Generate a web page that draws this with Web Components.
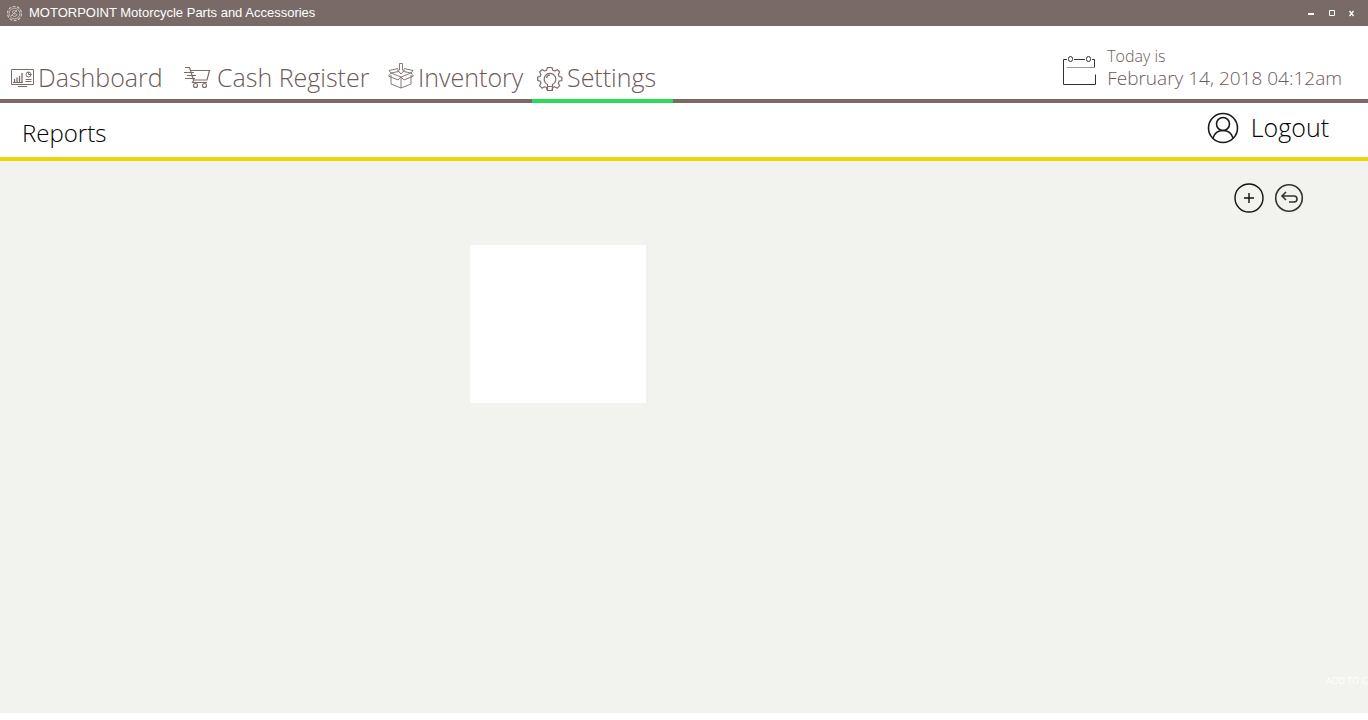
<!DOCTYPE html>
<html lang="en">
<head>
<meta charset="utf-8">
<title>MOTORPOINT Motorcycle Parts and Accessories</title>
<style>
  html, body { margin: 0; background: #fff; }
  body { font-family: "Open Sans", "Noto Sans", sans-serif; font-weight: 300; --brand: #796a67; --text: #6b5b58; color: var(--text); }
</style>
</head>
<body>
<pos-app></pos-app>

<template id="app">
  <style>
    :host { display: flex; flex-direction: column; min-height: 100vh; overflow-x: hidden; }
    reports-page { flex: 1; margin-bottom: 7px; }
  </style>
  <title-bar>MOTORPOINT Motorcycle Parts and Accessories</title-bar>
  <main-header></main-header>
  <sub-header>Reports</sub-header>
  <reports-page></reports-page>
</template>

<template id="title-bar">
  <style>
    :host { display: flex; align-items: center; height: 26px; padding: 0 11px 0 6px; background: var(--brand); color: #fff; font: 13px/26px "Liberation Sans", Arial, sans-serif; box-sizing: border-box; }
    span { flex: 1; margin-left: 6px; }
    button { width: 10px; height: 16px; margin-left: 10px; padding: 0; border: 0; background: none; color: inherit; display: block; }
    svg { display: block; }
  </style>
  <svg width="17" height="17" viewBox="0 0 17 17" fill="none" stroke="#d2cac8"><circle cx="8.500" cy="8.500" r="7" stroke-dasharray="3 1.400" stroke-width="1.200"/><circle cx="8.500" cy="8.500" r="5.300" stroke-width=".8"/><path d="M11 6.500C9 5 6 5.500 6.500 7.500s4.500.500 4.500 2.300-3.500 2-5 .5M5 11l6-6" stroke-width=".9"/></svg>
  <span><slot></slot></span>
  <button aria-label="Minimize"><svg width="10" height="16"><path d="M1 8h6v2H1z" fill="#fff"/></svg></button>
  <button aria-label="Maximize"><svg width="10" height="16"><path d="M2.500 5.500h5v5h-5z" fill="none" stroke="#fff"/></svg></button>
  <button aria-label="Close"><svg width="10" height="16"><path d="M2.500 6l4 5M6.500 6l-4 5" stroke="#fff" stroke-width="1.300"/></svg></button>
</template>

<template id="main-header">
  <style>
    :host { display: flex; justify-content: space-between; height: 77px; box-sizing: border-box; background: linear-gradient(var(--brand), var(--brand)) bottom / 100% 4px no-repeat #fff; }
    nav { display: grid; grid-template-columns: 174px 203px 150px 141px; margin-left: 5px; }
    .date { display: flex; gap: 10px; padding: 20px 26px 0 0; white-space: nowrap; }
    .date svg { margin-top: 8px; }
    small, time { display: block; }
    small { font-size: 16px; line-height: 21px; }
    time { font-size: 19px; line-height: 22px; }
  </style>
  <nav>
    <nav-tab label="Dashboard">
      <svg width="24" height="22" viewBox="0 0 24 22" fill="none" stroke="#7b6c69"><path d="M1.500 2.500h22v15h-22zM8 19.500h9"/><path d="M4.500 15v-3M7 15v-4.500M9.500 15V9M12 15V6" stroke-width="1.300"/><path d="M3 15.500h10M15.500 12.500h6M15.500 14.500h6"/><circle cx="18.500" cy="7.500" r="2.500"/><path d="M18.500 7.500V5M18.500 7.500h3"/></svg>
    </nav-tab>
    <nav-tab label="Cash Register">
      <svg width="29" height="24" viewBox="0 0 29 24" fill="none" stroke="#7b6c69" stroke-width="1.200"><path d="M1 1.500h4.500l4 12.500h13.500L25.500 4.500H7M10 14l-1.500 2.500H23"/><path d="M0 6.500h10M3 9.500h9M1 12.500h10"/><circle cx="11.500" cy="19.500" r="2"/><circle cx="20.500" cy="19.500" r="2"/></svg>
    </nav-tab>
    <nav-tab label="Inventory">
      <svg width="27" height="30" viewBox="0 0 27 30" fill="none" stroke="#7b6c69" stroke-width=".9"><path d="M4 12v9l10 4 10-4v-9M14 14v11M14 14L4 10l10-2 10 2zM4 10L1.500 13l9.500 4 3-3 3 3 9.500-4L24 10M4 10L2 7.500l9-2M24 10l2-2.500-9-2"/><path d="M12.500.500h3V7h2L14 11 10.500 7h2z" fill="#fff"/></svg>
    </nav-tab>
    <nav-tab label="Settings" active>
      <svg width="26" height="26" viewBox="0 0 26 26" fill="none" stroke="#7b6c69" stroke-width="1.200"><path d="M10 25l-.5-2.500-2-.8-2.500 1.500-2.500-2.500L4 18.200l-.8-2L.7 15.500v-3.400l2.500-.6.8-2L2.500 7 5 4.600 7.500 6l2-.8L10.500 2.500h4.500l.7 2.700 2 .8 2.600-1.400L22.700 7l-1.400 2.500.8 2 2.700.6v3.400l-2.700.7-.8 2 1.400 2.500-2.400 2.500-2.600-1.500-2 .8L15 25" stroke-linejoin="round"/><path d="M10.500 25.500v-6a5.800 5.800 0 1 1 5 0v6zM10.500 21.500h5M9.500 13a4 4 0 0 1 3.500-3"/></svg>
    </nav-tab>
  </nav>
  <div class="date">
    <svg width="35" height="34" viewBox="0 0 35 34" fill="none" stroke="#333"><path d="M5 5.500H1.500v25h32V20.500M12 5.500h11M30 5.500h2.500v8"/><path d="M5 13.500h27" stroke="#999"/><rect x="6.500" y="2.500" width="4" height="5" rx="2"/><rect x="24.500" y="2.500" width="4" height="5" rx="2"/></svg>
    <div><small>Today is</small><time datetime="2018-02-14T04:12">February 14, 2018 04:12am</time></div>
  </div>
</template>

<template id="nav-tab">
  <style>
    :host { display: flex; box-sizing: border-box; border-bottom: 4px solid transparent; }
    :host([active]) { border-color: #2bdb55; }
    a { display: flex; align-items: center; gap: 4px; margin-top: 30px; height: 43px; padding-left: 5px; color: inherit; text-decoration: none; font-size: 25px; line-height: 43px; white-space: nowrap; }
    ::slotted(svg) { display: block; }
  </style>
  <a href="#"><slot></slot><span></span></a>
</template>

<template id="sub-header">
  <style>
    :host { display: flex; justify-content: space-between; height: 58px; box-sizing: border-box; padding: 0 39px 0 22px; background: #fff; border-bottom: 4px solid #e9d60b; color: #000; }
    h1 { margin: 0; font-size: 24px; line-height: 60px; font-weight: inherit; }
    button { display: flex; align-items: center; gap: 12px; height: 49px; padding: 0; border: 0; background: none; color: inherit; font: inherit; font-size: 25px; line-height: 49px; }
  </style>
  <h1><slot></slot></h1>
  <button><svg width="32" height="32" viewBox="0 0 32 32" fill="none" stroke="#1a1a1a" stroke-width="1.600"><circle cx="16" cy="16" r="14.500"/><circle cx="16" cy="12" r="6.500"/><path d="M6 26c1.500-5 5-7.500 10-7.500S24.500 21 26 26"/></svg>Logout</button>
</template>

<template id="reports-page">
  <style>
    :host { display: flex; flex-direction: column; background: #f2f3ee; }
    .tools { display: flex; justify-content: flex-end; gap: 10px; padding: 22px 64px 0 0; }
    .tools button { padding: 0; border: 0; background: none; }
    svg { display: block; }
    .card { width: 176px; height: 158px; margin: 32px 0 0 470px; background: #fff; }
    .add { align-self: flex-end; width: 42px; margin: auto 0 26px; padding: 0; border: 0; background: none; overflow: hidden; white-space: nowrap; text-align: left; color: #fff; font: 9px/12px "Open Sans", sans-serif; }
  </style>
  <div class="tools">
    <button aria-label="Add"><svg width="30" height="30" viewBox="0 0 30 30" fill="none" stroke="#111" stroke-width="1.400"><circle cx="15" cy="15" r="14"/><path d="M10 15h10M15 10v10"/></svg></button>
    <button aria-label="Back"><svg width="30" height="30" viewBox="0 0 30 30" fill="none" stroke="#333" stroke-width="1.600"><circle cx="15" cy="15" r="13.300"/><path d="M12 9l-4 4 4 4M8 13h12a3 3 0 0 1 0 6h-5"/></svg></button>
  </div>
  <div class="card"></div>
  <button class="add">ADD TO C</button>
</template>

<script>
  class Base extends HTMLElement {
    constructor() {
      super();
      const source = document.getElementById(this.constructor.template);
      this.attachShadow({ mode: "open" }).append(source.content.cloneNode(true));
    }
  }
  class NavTab extends Base {
    static template = "nav-tab";
    connectedCallback() {
      this.shadowRoot.querySelector("span").textContent = this.getAttribute("label");
      if (this.hasAttribute("active")) this.shadowRoot.querySelector("a").setAttribute("aria-current", "page");
    }
  }
  customElements.define("nav-tab", NavTab);
  customElements.define("title-bar", class extends Base { static template = "title-bar"; });
  customElements.define("main-header", class extends Base { static template = "main-header"; });
  customElements.define("sub-header", class extends Base { static template = "sub-header"; });
  customElements.define("reports-page", class extends Base { static template = "reports-page"; });
  customElements.define("pos-app", class extends Base { static template = "app"; });
</script>
</body>
</html>
